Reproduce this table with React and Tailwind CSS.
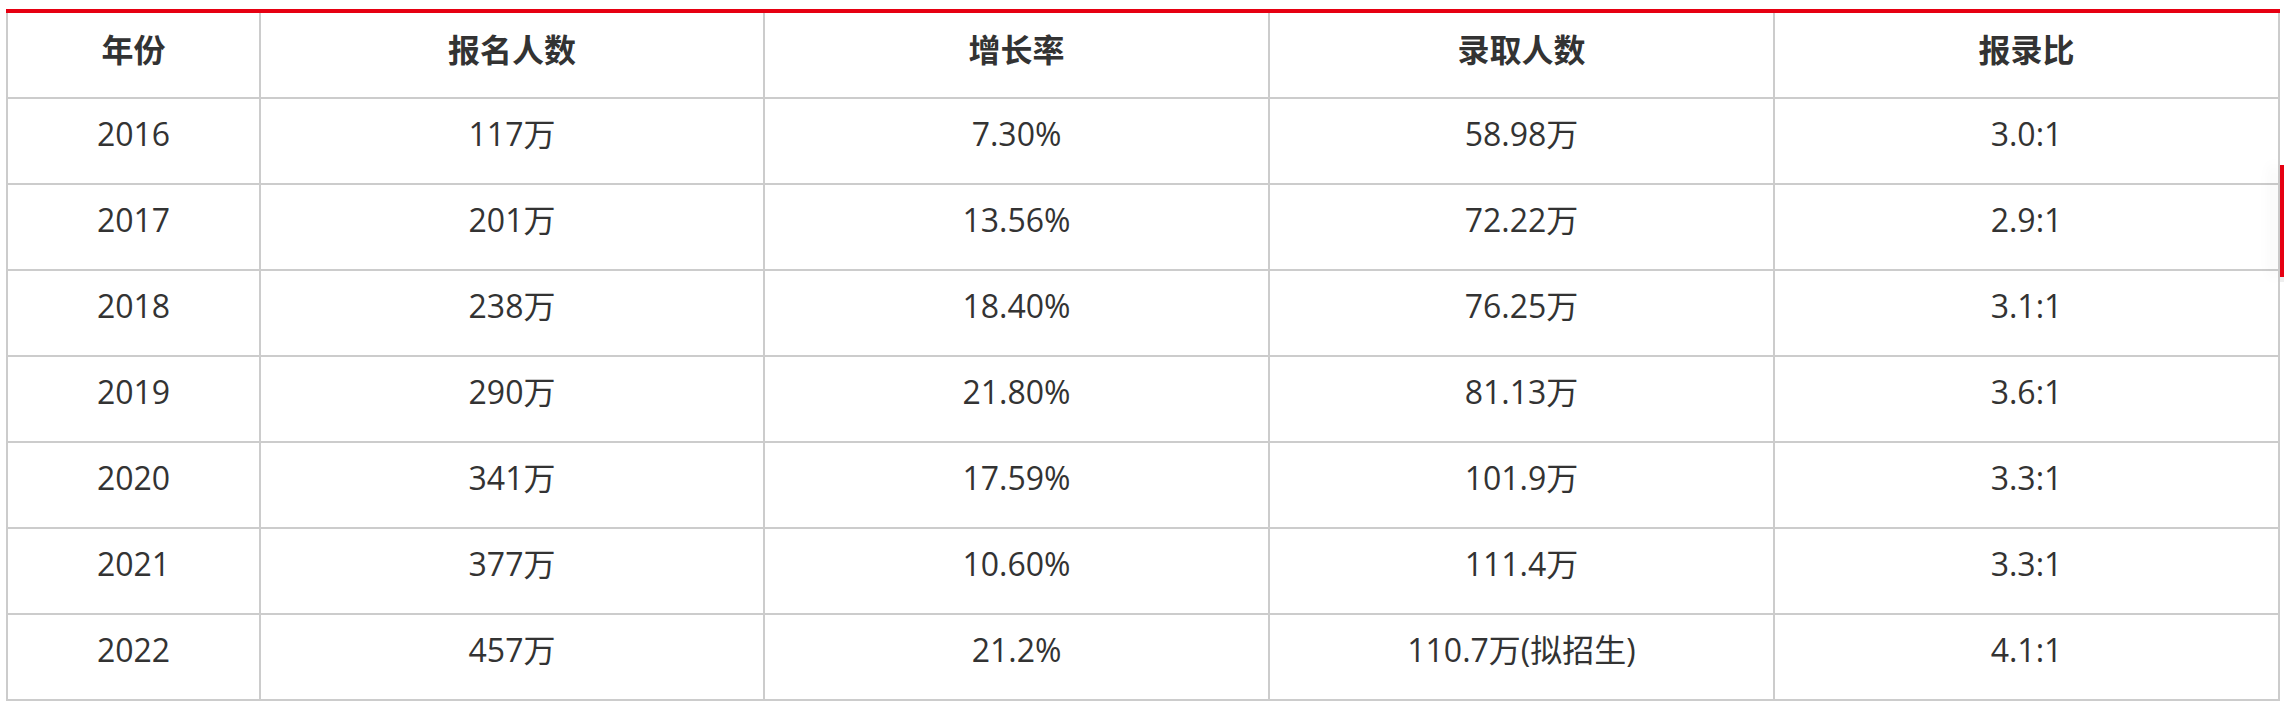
const rows = [
  ["2016", "117万", "7.30%", "58.98万", "3.0:1"],
  ["2017", "201万", "13.56%", "72.22万", "2.9:1"],
  ["2018", "238万", "18.40%", "76.25万", "3.1:1"],
  ["2019", "290万", "21.80%", "81.13万", "3.6:1"],
  ["2020", "341万", "17.59%", "101.9万", "3.3:1"],
  ["2021", "377万", "10.60%", "111.4万", "3.3:1"],
  ["2022", "457万", "21.2%", "110.7万(拟招生)", "4.1:1"],
];

const heads = ["年份", "报名人数", "增长率", "录取人数", "报录比"];

const Cell = ({ children, bold }) => (
  <div
    className={`h-[86px] border-r-2 border-b-2 border-[#cccccc] pt-[13px] text-center leading-[44px] text-[32px] text-[#333333] ${
      bold ? "font-bold" : "font-normal"
    }`}
  >
    {children}
  </div>
);

export default function App() {
  return (
    <div
      className="relative w-[2284px] h-[709px] bg-white pt-[9px] pl-[6px] overflow-hidden"
      style={{ fontFamily: '"Open Sans", "Noto Sans CJK SC", sans-serif' }}
    >
      <div className="w-[2274px]">
        <div className="h-[4px] bg-[#e60012]" />
        <div className="grid grid-cols-[253px_504px_505px_505px_505px] border-l-2 border-[#cccccc]">
          {heads.map((h) => (
            <Cell key={h} bold>
              <span style={{ fontFamily: '"Noto Sans CJK SC", sans-serif' }}>{h}</span>
            </Cell>
          ))}
          {rows.map((r) =>
            r.map((c, i) => <Cell key={r[0] + i}>{c}</Cell>)
          )}
        </div>
      </div>

      {/* floating side tab, mostly off screen */}
      <div className="absolute right-0 top-[165px] flex flex-col">
        <div className="w-[4px] h-[112px] bg-[#e60012] shadow-[-8px_0_14px_rgba(0,0,0,0.08)]" />
        <div className="w-[4px] h-[5px] bg-[#eeeeee]" />
      </div>
    </div>
  );
}
